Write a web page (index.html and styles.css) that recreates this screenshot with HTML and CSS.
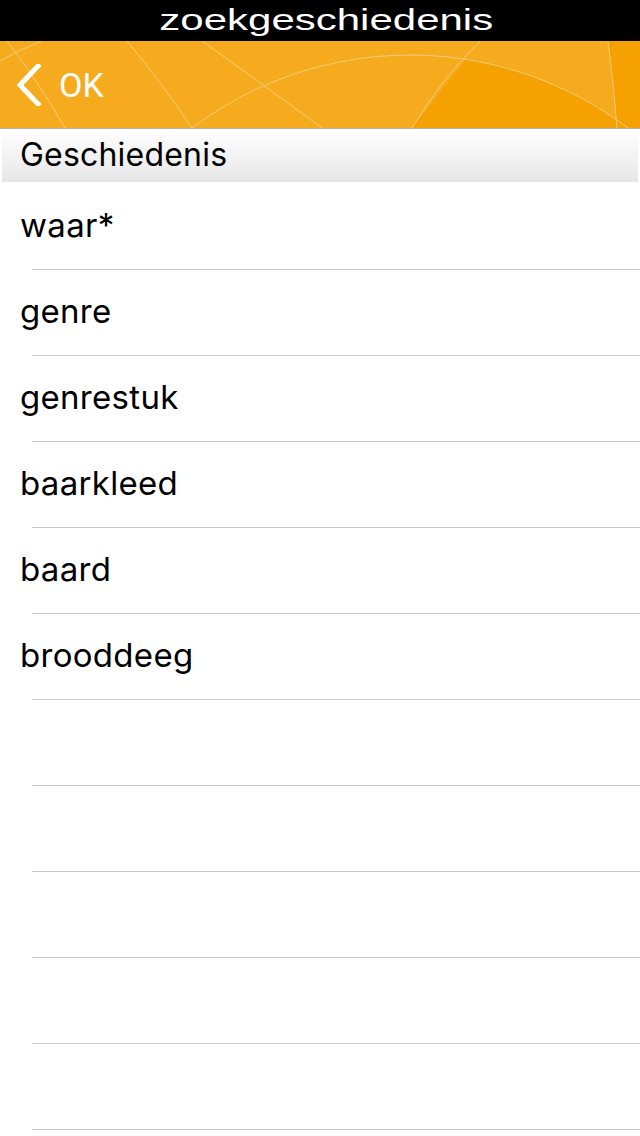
FILE: index.html
```html
<!DOCTYPE html>
<html lang="nl">
<head>
<meta charset="utf-8">
<title>zoekgeschiedenis</title>
<link rel="stylesheet" href="styles.css">
</head>
<body>
<div class="app">
  <div class="titlebar"><span class="title-text">zoekgeschiedenis</span></div>
  <header class="navbar">
    <svg class="navbar-bg" width="640" height="87" viewBox="0 0 640 87" aria-hidden="true">
      <defs>
        <clipPath id="arcclip"><circle cx="410" cy="376" r="362"/></clipPath>
      </defs>
      <rect width="640" height="87" fill="#f6ab1e"/>
      <polygon points="480,0 640,0 640,87 412,87" fill="#f4a101" clip-path="url(#arcclip)"/>
      <polygon points="608,0 640,0 640,87 617,87" fill="#f4a101"/>
      <g fill="none" stroke="#fad58a" stroke-width="1" opacity="0.85">
        <circle cx="410" cy="376" r="362"/>
        <path d="M0 20 Q 18 9 42 0"/>
        <path d="M7 0 Q 38 40 65 87"/>
        <path d="M127 0 Q 162 42 192 87"/>
        <path d="M202 0 Q 265 45 322 87"/>
        <path d="M480 0 Q 440 40 412 87"/>
        <path d="M608 0 Q 614 45 617 87"/>
      </g>
    </svg>
    <button class="back">
      <svg class="chevron" width="28" height="42" viewBox="0 0 28 42" aria-hidden="true">
        <path d="M24 2 L6 21 L24 40" fill="none" stroke="#fff" stroke-width="5" stroke-linecap="square" stroke-linejoin="miter"/>
      </svg>
      <span class="back-label">OK</span>
    </button>
  </header>
  <div class="section-header">Geschiedenis</div>
  <ul class="list">
    <li class="row">waar*</li>
    <li class="row">genre</li>
    <li class="row">genrestuk</li>
    <li class="row">baarkleed</li>
    <li class="row">baard</li>
    <li class="row">brooddeeg</li>
    <li class="row"></li>
    <li class="row"></li>
    <li class="row"></li>
    <li class="row"></li>
    <li class="row"></li>
  </ul>
</div>
</body>
</html>
```

FILE: styles.css
```css
* { box-sizing: border-box; }
html, body { margin: 0; padding: 0; background: #fff; }
body { width: 640px; height: 1136px; overflow: hidden; font-family: Inter, "Noto Sans", sans-serif; }

.app { display: flex; flex-direction: column; }

.titlebar {
  height: 41px;
  background: #000;
  display: flex;
  justify-content: center;
  align-items: center;
  padding-left: 12px;
  overflow: hidden;
}
.title-text {
  font-family: "Liberation Sans", Arial, sans-serif;
  font-size: 30px;
  color: #fff;
  line-height: 41px;
  display: inline-block;
  transform: scaleX(1.4);
  transform-origin: center;
  position: relative;
  top: -1px;
}

.navbar {
  position: relative;
  height: 88px;
  border-bottom: 1px solid #b3b3b3;
  display: flex;
  align-items: center;
  overflow: hidden;
}
.navbar-bg { position: absolute; left: 0; top: 0; }

.back {
  position: relative;
  display: flex;
  align-items: center;
  gap: 17px;
  background: none;
  border: 0;
  padding: 0 0 0 14px;
  cursor: pointer;
}
.chevron { display: block; }
.back-label {
  font-family: Roboto, "Liberation Sans", sans-serif;
  font-size: 34px;
  color: #fff;
  line-height: 40px;
}

.section-header {
  height: 53px;
  margin: 0 2px;
  padding: 0 0 2px 18px;
  display: flex;
  align-items: center;
  background: linear-gradient(#ffffff, #e6e6e6);
  font-size: 32px;
  letter-spacing: 0.2px;
  color: #000;
}

.list { list-style: none; margin: 0; padding: 2px 0 0; }
.row {
  height: 86px;
  padding: 0 0 4px 20px;
  display: flex;
  align-items: center;
  font-size: 33px;
  letter-spacing: 0.3px;
  color: #000;
  background: linear-gradient(#c8c8c8, #c8c8c8) no-repeat 32px 100% / calc(100% - 32px) 1px;
}
```
